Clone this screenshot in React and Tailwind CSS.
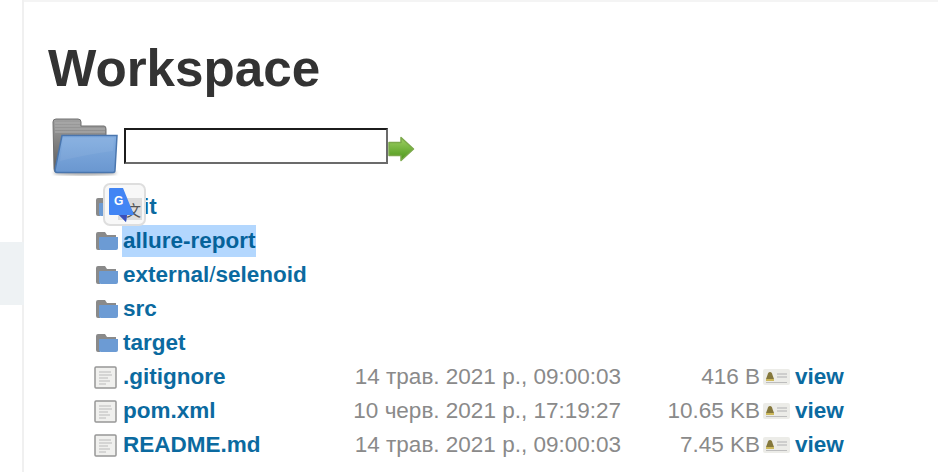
const rows = [
  { name: '.git', type: 'dir' },
  { name: 'allure-report', type: 'dir', selected: true },
  { name: 'external', rest: 'selenoid', type: 'dir' },
  { name: 'src', type: 'dir' },
  { name: 'target', type: 'dir' },
  { name: '.gitignore', type: 'file', date: '14 трав. 2021 р., 09:00:03', size: '416 B' },
  { name: 'pom.xml', type: 'file', date: '10 черв. 2021 р., 17:19:27', size: '10.65 KB' },
  { name: 'README.md', type: 'file', date: '14 трав. 2021 р., 09:00:03', size: '7.45 KB' },
]

function BigFolder() {
  return (
    <svg width="68" height="60" viewBox="0 0 68 60" className="mt-[2px] shrink-0">
      <defs>
        <linearGradient id="bigBack" x1="0" y1="0" x2="0" y2="1">
          <stop offset="0" stopColor="#a0a0a0" />
          <stop offset="1" stopColor="#5a5a5a" />
        </linearGradient>
        <linearGradient id="bigFront" x1="0" y1="0" x2="0" y2="1">
          <stop offset="0" stopColor="#84aee0" />
          <stop offset="1" stopColor="#6a97d0" />
        </linearGradient>
        <filter id="bigBlur"><feGaussianBlur stdDeviation="1.5" /></filter>
      </defs>
      <ellipse cx="34" cy="56" rx="32" ry="2.5" fill="#aaa" filter="url(#bigBlur)" />
      <path d="M2 5 Q2 2 5 2 H27 Q30 2 30 5 V9 H53 Q55 9 55 12 V20 H12 L8 55 H5 Q3 55 3 52 Z" fill="url(#bigBack)" stroke="#707070" />
      <path d="M4 6 H29 M4 9 H29 M4 12 H54 M4 15 H54" stroke="#b0b0b0" strokeWidth="1" fill="none" />
      <path d="M11 18.5 H66 L64 53 Q64 55.5 62 55.5 H6 Q4 55.5 4 53 Z" fill="url(#bigFront)" stroke="#4a76ae" strokeWidth="1.5" />
      <path d="M12 21 H63 L62 34 Q38 37 9 44 Z" fill="#fff" opacity="0.06" />
    </svg>
  )
}

function SmallFolder() {
  return (
    <svg width="24" height="20" viewBox="0 0 24 20" className="shrink-0">
      <path d="M1 3 Q1 1 3 1 H10 L12 4 H21 V8 H5 V19 H3 Q1 19 1 17 Z" fill="#8a8a8a" />
      <path d="M5 6 H23 V17 Q23 19 21 19 H6 Q4 19 4 17 V7 Q4 6 5 6 Z" fill="#6c9bd4" />
    </svg>
  )
}

function FileIcon() {
  return (
    <svg width="23" height="23" viewBox="0 0 23 23" className="-ml-[1px] shrink-0">
      <rect x="1" y="1" width="21" height="21" rx="1" fill="#f0f0ee" stroke="#969696" strokeWidth="1.5" />
      <path d="M5 6 H17 M5 9 H18 M5 12 H14 M5 15 H16 M5 18 H12" stroke="#cbcbcb" strokeWidth="1.5" />
    </svg>
  )
}

function ViewIcon() {
  return (
    <svg width="27" height="16" viewBox="0 0 27 16" className="shrink-0">
      <rect x="0" y="0" width="27" height="16" rx="2" fill="#ecece8" />
      <path d="M7 3 Q9 3 9.5 6 L11 10 H3 L4.5 6 Q5 3 7 3 Z" fill="#85783c" />
      <rect x="3" y="10" width="8" height="2" fill="#cdb95c" />
      <path d="M14 5 H24 M14 8 H24" stroke="#c4c4c4" strokeWidth="1.5" />
      <path d="M3 13.5 H24" stroke="#bdbdbd" strokeWidth="1" />
    </svg>
  )
}

function GoArrow() {
  return (
    <svg width="27" height="26" viewBox="0 0 27 26" className="mt-[6px] shrink-0">
      <defs>
        <linearGradient id="arrowFill" x1="0" y1="0" x2="0" y2="1">
          <stop offset="0" stopColor="#9fd064" />
          <stop offset="1" stopColor="#4a9618" />
        </linearGradient>
      </defs>
      <path d="M1 6.5 H13 V1.5 L25.5 13 L13 24.5 V19.5 H1 Z" fill="url(#arrowFill)" stroke="#7ba84a" strokeWidth="1.5" strokeLinejoin="round" />
    </svg>
  )
}

function TranslateIcon() {
  return (
    <div className="absolute left-[103px] top-[183px] flex h-[43px] w-[43px] items-center justify-center rounded-[7px] border-2 border-[#dedede] bg-[#f8f8f8]">
      <svg width="34" height="36" viewBox="0 0 34 36">
        <rect x="10" y="11" width="24" height="22" fill="#dcdcdc" />
        <text x="18" y="29" fontSize="15" fill="#555" fontFamily="'Noto Sans CJK SC', sans-serif">文</text>
        <path d="M2 1 H15 L26 28 H19 L18 35 L11 28 H2 Q1 28 1 27 V2 Q1 1 2 1 Z" fill="#4285f4" />
        <path d="M11 28 L18 35 L19 28 Z" fill="#3b4fb8" />
        <text x="6" y="18" fontSize="12" fontWeight="700" fill="#fff" fontFamily="'Liberation Sans', sans-serif">G</text>
      </svg>
    </div>
  )
}

export default function App() {
  return (
    <div className="relative flex h-[472px] w-[938px] overflow-hidden bg-white font-['Liberation_Sans',sans-serif]">
      {/* sidebar edge */}
      <div className="flex w-[24px] shrink-0 flex-col border-r-2 border-[#f0f0f0] pt-[242px]">
        <div className="h-[63px] w-[24px] bg-[#eef2f4]"></div>
      </div>

      <div className="min-w-0 flex-1 border-t-2 border-[#f4f4f4] pl-[24px]">
        <h1 className="mt-[37px] text-[51.2px] leading-[60px] font-bold text-[#333]">Workspace</h1>

        <div className="mt-[17px] flex h-[60px] items-center pl-[3px]">
          <BigFolder />
          <div className="ml-[5px] h-[36px] w-[264px] border-2 border-t-[#1c1c1c] border-r-[#6b6b6b] border-b-[#6b6b6b] border-l-[#1c1c1c] bg-white"></div>
          <GoArrow />
        </div>

        <div className="mt-[14px] flex flex-col pl-[47px]">
          {rows.map((row) => (
            <div key={row.name} className="grid h-[34px] grid-cols-[24px_232px_270px_139px_35px_auto] items-center text-[22.5px] leading-[32px]">
              {row.type === 'dir' ? <SmallFolder /> : <FileIcon />}
              <div className="whitespace-nowrap pl-[4px]">
                <span className={`inline-block font-bold text-[#0b6aa0] ${row.selected ? '-ml-[1px] bg-[#b3d7fe] pl-[1px] text-[#05629a]' : ''}`}>
                  {row.name}
                </span>
                {row.rest && (
                  <>
                    <span className="text-[#0b6aa0]">/</span>
                    <span className="font-bold text-[#0b6aa0]">{row.rest}</span>
                  </>
                )}
              </div>
              <div className="whitespace-nowrap text-right text-[#8a8a8a]">{row.date}</div>
              <div className="whitespace-nowrap text-right text-[#8a8a8a]">{row.size}</div>
              {row.type === 'file' ? <div className="pl-[3px]"><ViewIcon /></div> : <div></div>}
              {row.type === 'file' ? <div className="font-bold text-[#0b6aa0]">view</div> : <div></div>}
            </div>
          ))}
        </div>
      </div>

      <TranslateIcon />
    </div>
  )
}
